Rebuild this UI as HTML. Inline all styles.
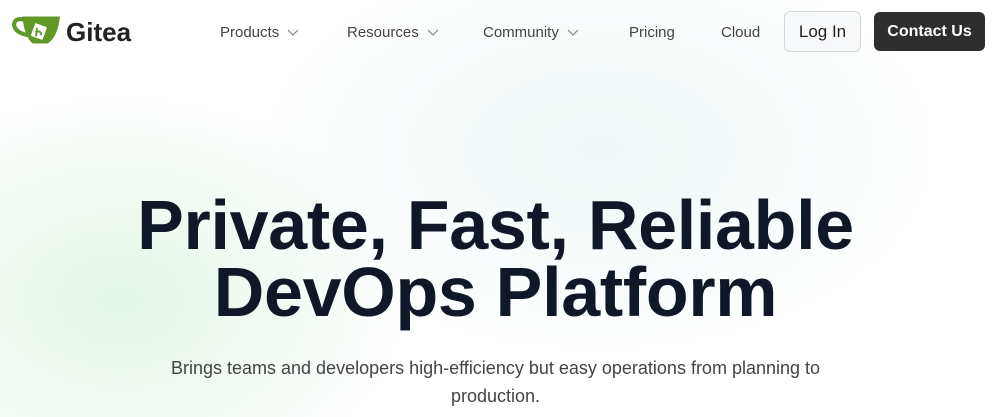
<!DOCTYPE html>
<html><head><meta charset="utf-8"><style>
body{margin:0;width:1007px;height:417px;overflow:hidden;font-family:"Liberation Sans",sans-serif;background:#fff;position:relative}
.bg{position:absolute;inset:0;background:radial-gradient(ellipse 420px 300px at 120px 300px,rgba(200,235,205,.5),transparent 70%),radial-gradient(ellipse 500px 300px at 600px 150px,rgba(225,242,240,.55),transparent 70%)}
.nav{position:absolute;top:0;left:0;right:0;height:64px}
.logo{position:absolute;left:12px;top:12px}
.brand{position:absolute;left:66px;top:17px;font-size:26px;font-weight:bold;color:#222}
.ni{position:absolute;top:24px;font-size:15px;color:#444}
.ni svg{vertical-align:middle;margin-left:8px}
.login{position:absolute;left:784px;top:11px;width:77px;height:41px;border:1px solid #d5d8dc;border-radius:6px;background:#f8f9fa;box-sizing:border-box;text-align:center;line-height:40px;font-size:17px;color:#222}
.contact{position:absolute;left:874px;top:12px;width:111px;height:39px;border-radius:6px;background:#2e2e2e;color:#fff;text-align:center;line-height:40px;font-size:16px;font-weight:bold}
h1{position:absolute;top:192px;left:-16px;right:0;margin:0;text-align:center;font-size:70px;line-height:67px;font-weight:bold;color:#101828;letter-spacing:-0.3px}
p{position:absolute;top:354px;left:-16px;right:0;margin:0;text-align:center;font-size:18px;line-height:28px;color:#444}
</style></head><body>
<div class="bg"></div>
<div class="nav">
<svg class="logo" width="50" height="36" viewBox="0 0 48 34"><path d="M12 7 Q2 5 2 12 Q3 20 16 22" fill="none" stroke="#609926" stroke-width="4"/><path d="M10 4 L46 4 Q44 24 34 30 L20 30 Q12 24 10 4Z" fill="#609926"/><rect x="20" y="12" width="12" height="13" rx="1" transform="rotate(20 26 18)" fill="#fff"/><path d="M24 15 L23 23 M23 19 Q28 17 28 22" stroke="#609926" stroke-width="1.8" fill="none"/></svg>
<div class="brand">Gitea</div>
<div class="ni" style="left:220px">Products<svg width="12" height="8"><path d="M1 1l5 5 5-5" stroke="#777" fill="none"/></svg></div>
<div class="ni" style="left:347px">Resources<svg width="12" height="8"><path d="M1 1l5 5 5-5" stroke="#777" fill="none"/></svg></div>
<div class="ni" style="left:483px">Community<svg width="12" height="8"><path d="M1 1l5 5 5-5" stroke="#777" fill="none"/></svg></div>
<div class="ni" style="left:629px">Pricing</div>
<div class="ni" style="left:721px">Cloud</div>
<div class="login">Log In</div>
<div class="contact">Contact Us</div>
</div>
<h1>Private, Fast, Reliable<br>DevOps Platform</h1>
<p>Brings teams and developers high-efficiency but easy operations from planning to<br>production.</p>
</body></html>
